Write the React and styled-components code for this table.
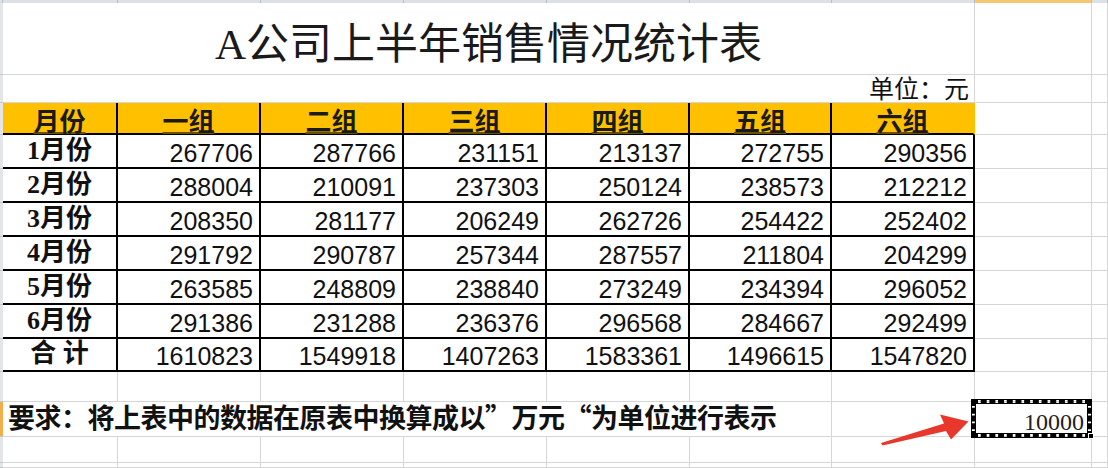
import React from 'react';
import styled, { createGlobalStyle } from 'styled-components';

const GlobalStyle = createGlobalStyle`
  html, body { margin: 0; padding: 0; background: #fff; }
  body { width: 1108px; height: 468px; overflow: hidden; }
  * { box-sizing: border-box; }
`;

const CJK = `"Noto Sans CJK SC", sans-serif`;
const GRID = '#d6d6d6';

const Sheet = styled.div`
  position: relative;
  display: grid;
  grid-template-columns: 3px 115px 143px 143px 143px 143px 142px 143px 117px 1fr;
  grid-template-rows: 3px 72px 28px 32px repeat(6, 34px) 33px 30px 35px 26px 1fr;
  width: 1108px;
  height: 468px;
  overflow: hidden;
  background: #fff;
`;

const ColHead = styled.div`
  grid-row: 1;
  grid-column: ${p => p.$c};
  background: ${p => (p.$active ? '#f5c772' : '#dde1e6')};
  border-right: 1px solid #b9bfc7;
`;

const RowHead = styled.div`
  grid-column: 1;
  grid-row: ${p => p.$r};
  background: ${p => (p.$active ? '#f1ae4a' : '#e3e5e8')};
  border-bottom: 1px solid #c4c8cc;
`;

const Cell = styled.div`
  grid-column: ${p => p.$c} / span ${p => p.$cs || 1};
  grid-row: ${p => p.$r};
  border-right: 1px solid ${GRID};
  border-bottom: 1px solid ${GRID};
  min-width: 0;
`;

const Title = styled(Cell)`
  display: flex;
  align-items: flex-end;
  justify-content: center;
  padding-bottom: 8px;
  font-family: "Liberation Serif", ${CJK};
  font-size: 43px;
  line-height: 1;
  color: #1a1a1a;
  white-space: nowrap;
`;

const Unit = styled(Cell)`
  display: flex;
  align-items: flex-end;
  justify-content: flex-end;
  padding: 0 5px 2px 0;
  font-family: ${CJK};
  font-size: 25px;
  line-height: 1;
  color: #111;
  white-space: nowrap;
`;

const Requirement = styled(Cell)`
  display: flex;
  align-items: flex-start;
  padding-left: 5px;
  padding-top: 1px;
  font-family: ${CJK};
  font-weight: 700;
  font-size: 27px;
  letter-spacing: -0.5px;
  line-height: 1;
  color: #111;
  white-space: nowrap;
  overflow: visible;
`;

const Selected = styled(Cell)`
  position: relative;
  display: flex;
  align-items: flex-end;
  justify-content: flex-end;
  padding: 0 7px 2px 0;
  font-family: "Liberation Serif", serif;
  font-size: 24px;
  line-height: 1;
  color: #222;
`;

const Marquee = styled.div`
  position: absolute;
  left: -3px;
  top: -2px;
  right: 0;
  bottom: -1px;
  border: 3px dashed #000;
  outline: 1px solid #000;
  box-shadow: inset 0 0 0 1px #000;
  pointer-events: none;
`;

const FillHandle = styled.div`
  position: absolute;
  right: -3px;
  bottom: -3px;
  width: 6px;
  height: 6px;
  background: #000;
  border: 1px solid #fff;
`;

const Table = styled.div`
  grid-column: 2 / 9;
  grid-row: 4 / 12;
  display: grid;
  grid-template-columns: 115px repeat(4, 143px) 142px 143px;
  grid-template-rows: 32px repeat(6, 34px) 33px;
`;

const TableCell = styled.div`
  display: flex;
  align-items: flex-end;
  border-bottom: 2px solid #000;
  border-right: 2px solid ${p => (p.$last && p.$head ? 'transparent' : '#000')};
  min-width: 0;
  white-space: nowrap;
`;

const HeadCell = styled(TableCell)`
  justify-content: center;
  background: #ffc000;
  font-family: ${CJK};
  font-weight: 700;
  font-size: 26px;
  line-height: 1;
  color: #1a1a1a;
  text-decoration: underline;
  text-decoration-thickness: 2px;
  text-underline-offset: 1px;
  text-decoration-color: #6b5000;
`;

const LabelCell = styled(TableCell)`
  justify-content: center;
  font-family: "Liberation Serif", ${CJK};
  font-weight: 700;
  font-size: 26px;
  line-height: 1;
  color: #111;
  padding-bottom: 3px;
`;

const NumCell = styled(TableCell)`
  justify-content: flex-end;
  padding: 0 6px 1px 0;
  font-family: "Liberation Sans", Arial, sans-serif;
  font-size: 25px;
  line-height: 1;
  color: #111;
`;

const Arrow = styled.svg`
  position: absolute;
  left: 0;
  top: 0;
  width: 1108px;
  height: 468px;
  pointer-events: none;
`;

const headers = ['月份', '一组', '二组', '三组', '四组', '五组', '六组'];
const rows = [
  ['1月份', 267706, 287766, 231151, 213137, 272755, 290356],
  ['2月份', 288004, 210091, 237303, 250124, 238573, 212212],
  ['3月份', 208350, 281177, 206249, 262726, 254422, 252402],
  ['4月份', 291792, 290787, 257344, 287557, 211804, 204299],
  ['5月份', 263585, 248809, 238840, 273249, 234394, 296052],
  ['6月份', 291386, 231288, 236376, 296568, 284667, 292499],
  ['合 计', 1610823, 1549918, 1407263, 1583361, 1496615, 1547820],
];

export default function App() {
  const colHeads = [];
  for (let c = 1; c <= 10; c++) colHeads.push(<ColHead key={`ch${c}`} $c={c} $active={c === 9} />);
  const rowHeads = [];
  for (let r = 2; r <= 15; r++) rowHeads.push(<RowHead key={`rh${r}`} $r={r} $active={r === 13} />);

  const rightCells = [];
  for (let r = 2; r <= 11; r++) {
    rightCells.push(<Cell key={`h${r}`} $c={9} $r={r} />);
    rightCells.push(<Cell key={`i${r}`} $c={10} $r={r} />);
  }

  const lowerRows = [];
  [12, 14, 15].forEach(r => {
    for (let c = 2; c <= 10; c++) lowerRows.push(<Cell key={`l${r}-${c}`} $c={c} $r={r} />);
  });

  return (
    <>
      <GlobalStyle />
      <Sheet>
        {colHeads}
        {rowHeads}
        <Title $c={2} $cs={7} $r={2}>A公司上半年销售情况统计表</Title>
        <Unit $c={2} $cs={7} $r={3}>单位：元</Unit>
        {rightCells}
        <Table>
          {headers.map((h, i) => (
            <HeadCell key={h} $head $last={i === headers.length - 1}>{h}</HeadCell>
          ))}
          {rows.map(row =>
            row.map((v, i) =>
              i === 0 ? (
                <LabelCell key={`${row[0]}-${i}`}>{v}</LabelCell>
              ) : (
                <NumCell key={`${row[0]}-${i}`} $last={i === row.length - 1}>{v}</NumCell>
              )
            )
          )}
        </Table>
        {lowerRows}
        <Requirement $c={2} $cs={6} $r={13}>要求：将上表中的数据在原表中换算成以”万元“为单位进行表示</Requirement>
        <Cell $c={8} $r={13} />
        <Selected $c={9} $r={13}>
          10000
          <Marquee />
          <FillHandle />
        </Selected>
        <Cell $c={10} $r={13} />
        <Arrow viewBox="0 0 1108 468">
          <path d="M881 443 L944 423.5 L940 414.5 L968.5 421.5 L951 439.5 L946 431 L882.5 445.5 Z" fill="#e8372c" />
        </Arrow>
      </Sheet>
    </>
  );
}
